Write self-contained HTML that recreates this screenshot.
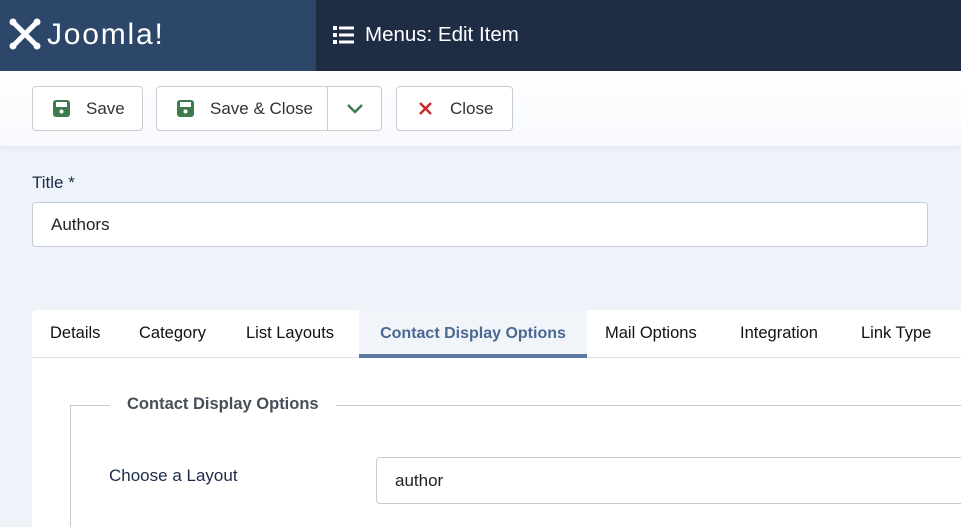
<!DOCTYPE html>
<html><head><meta charset="utf-8"><style>
*{box-sizing:border-box;margin:0;padding:0}
html,body{width:961px;height:527px;overflow:hidden}
body{background:#eef2f9;font-family:"Liberation Sans",sans-serif;position:relative}
.hdr{position:absolute;top:0;left:0;width:961px;height:71px;background:#1f2d44}
.logo{position:absolute;left:0;top:0;width:316px;height:71px;background:#2d476b}
.logo span{position:absolute;left:47px;top:18px;color:#fff;font-size:30px;letter-spacing:1.8px}
.title{position:absolute;left:333px;top:23px;color:#fff;font-size:20.5px}
.tb{position:absolute;top:71px;left:0;width:961px;height:75px;background:linear-gradient(#fff,#f7f9fc);box-shadow:0 2px 6px rgba(0,0,0,.06)}
.btn{position:absolute;top:15px;height:45px;border:1px solid #c8ccd3;border-radius:4px;background:#fff;color:#333;font-size:17px;line-height:43px}
.lbl{position:absolute;left:32px;top:173px;font-size:17px;color:#1c2c48}
.inp{position:absolute;left:32px;top:202px;width:896px;height:45px;border:1px solid #c4cbd6;border-radius:4px;background:#fff;font-size:17px;line-height:43px;padding-left:18px;color:#222}
.card{position:absolute;left:32px;top:310px;width:929px;height:217px;background:#fff;border-radius:4px 0 0 0;overflow:hidden}
.tabs{height:48px;border-bottom:1px solid #dce1e8;position:relative}
.tab{position:absolute;top:0;height:48px;line-height:47px;font-size:16.5px;color:#111}
.act{background:#f1f4f9;color:#4a6891;font-weight:bold;border-bottom:4px solid #5a7aa3;height:48px;font-size:16px}
.fs{position:absolute;left:38px;top:95px;width:920px;height:200px;border:1px solid #c3ccd6;border-right:none}
.lg{position:absolute;left:78px;top:85px;background:#fff;padding:0 17px;font-size:16.5px;font-weight:bold;color:#474f59}
</style></head><body>
<div class="hdr">
 <div class="logo">
  <svg style="position:absolute;left:8px;top:17px" width="34" height="34" viewBox="0 0 34 34" fill="none" stroke="#fff" stroke-width="5" stroke-linecap="round"><path d="M7 7L27 27M27 7L7 27"/><circle cx="5" cy="5" r="3.5" fill="#fff" stroke="none"/><circle cx="29" cy="5" r="3.5" fill="#fff" stroke="none"/><circle cx="5" cy="29" r="3.5" fill="#fff" stroke="none"/><circle cx="29" cy="29" r="3.5" fill="#fff" stroke="none"/></svg>
  <span>Joomla!</span>
 </div>
 <svg style="position:absolute;left:333px;top:26px" width="21" height="18" viewBox="0 0 21 18" fill="#fff"><rect x="0" y="0" width="4" height="4"/><rect x="0" y="7" width="4" height="4"/><rect x="0" y="14" width="4" height="4"/><rect x="6" y="0.5" width="15" height="3"/><rect x="6" y="7.5" width="15" height="3"/><rect x="6" y="14.5" width="15" height="3"/></svg>
 <div class="title" style="left:365px">Menus: Edit Item</div>
</div>
<div class="tb">
 <div class="btn" style="left:32px;width:111px"><svg style="position:absolute;left:20px;top:13px" width="17" height="17" viewBox="0 0 17 17"><rect width="17" height="17" rx="3" fill="#3d7a4e"/><rect x="3" y="2" width="11" height="5" fill="#fff"/><circle cx="8.5" cy="11.5" r="2" fill="#fff"/></svg><span style="position:absolute;left:53px">Save</span></div>
 <div class="btn" style="left:156px;width:226px"><svg style="position:absolute;left:20px;top:13px" width="17" height="17" viewBox="0 0 17 17"><rect width="17" height="17" rx="3" fill="#3d7a4e"/><rect x="3" y="2" width="11" height="5" fill="#fff"/><circle cx="8.5" cy="11.5" r="2" fill="#fff"/></svg><span style="position:absolute;left:53px">Save &amp; Close</span><div style="position:absolute;left:170px;top:0;width:1px;height:43px;background:#c8ccd3"></div><svg style="position:absolute;left:190px;top:17px" width="16" height="10" viewBox="0 0 16 10" fill="none" stroke="#3d7a4e" stroke-width="2.4"><path d="M1 1l7 7 7-7"/></svg></div>
 <div class="btn" style="left:396px;width:117px"><svg style="position:absolute;left:22px;top:15px" width="13" height="13" viewBox="0 0 13 13" stroke="#c52827" stroke-width="2.4"><path d="M1 1l11 11M12 1L1 12"/></svg><span style="position:absolute;left:53px">Close</span></div>
</div>
<div class="lbl">Title *</div>
<div class="inp">Authors</div>
<div class="card">
 <div class="tabs">
  <div class="tab" style="left:18px">Details</div>
  <div class="tab" style="left:107px">Category</div>
  <div class="tab" style="left:214px">List Layouts</div>
  <div class="tab act" style="left:327px;width:228px;text-align:center">Contact Display Options</div>
  <div class="tab" style="left:573px">Mail Options</div>
  <div class="tab" style="left:708px">Integration</div>
  <div class="tab" style="left:829px">Link Type</div>
 </div>
 <div class="fs"></div>
 <div class="lg">Contact Display Options</div>
 <div style="position:absolute;left:77px;top:156px;font-size:17px;color:#1c2c48">Choose a Layout</div>
 <div style="position:absolute;left:344px;top:147px;width:620px;height:47px;border:1px solid #c4cbd6;border-radius:4px;font-size:17px;line-height:45px;padding-left:18px;color:#222">author</div>
</div>
</body></html>
